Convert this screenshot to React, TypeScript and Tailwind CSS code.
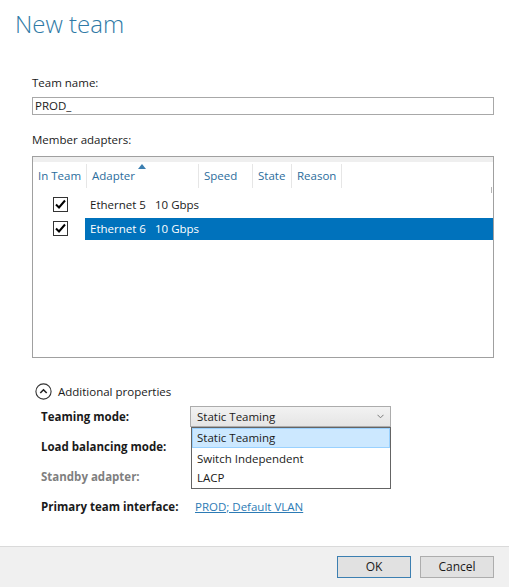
import React from 'react';

const font = { fontFamily: '"Segoe UI", "Open Sans", "Noto Sans", sans-serif' };

const adapters = [
  { name: 'Ethernet 5', speed: '10 Gbps', selected: false },
  { name: 'Ethernet 6', speed: '10 Gbps', selected: true },
];

const columns = [
  { label: 'In Team', w: 'w-[54px]' },
  { label: 'Adapter', w: 'w-[112px]', sorted: true },
  { label: 'Speed', w: 'w-[54px]' },
  { label: 'State', w: 'w-[39px]' },
  { label: 'Reason', w: 'w-[50px]' },
];

function Check() {
  return (
    <div className="w-[15px] h-[15px] border border-[#333] bg-white flex items-center justify-center">
      <svg width="11" height="10" viewBox="0 0 11 10">
        <path d="M1 5.5 L4 8.5 L10 1.5" fill="none" stroke="#000" strokeWidth="2" />
      </svg>
    </div>
  );
}

export default function App() {
  return (
    <div className="w-[509px] h-[587px] bg-white flex flex-col text-[11.5px] text-[#1a1a1a] overflow-hidden" style={font}>
      <div className="flex-1 flex flex-col">
        {/* Title */}
        <h1 className="pl-[15px] pt-[8px] text-[24px] font-light leading-[32px] text-[#2f7aa6]">New team</h1>

        <div className="pl-[32px] pr-[15px]">
          <p className="mt-[35px] leading-[16px]">Team name:</p>
          <div className="mt-[6px] h-[18px] border border-[#a8a8a8] flex items-center px-[2px] leading-none">PROD_</div>

          <p className="mt-[17px] leading-[16px]">Member adapters:</p>

          {/* Adapter list */}
          <div className="mt-[8px] h-[202px] border border-[#a0a0a0] flex flex-col relative">
            <div className="h-[5px] bg-[#efefef]" />
            <div className="mt-[2px] flex h-[24px] items-stretch">
              {columns.map(c => (
                <div key={c.label} className={`${c.w} relative flex items-center pl-[5px] border-r border-[#e6e6e6] text-[#2b6d9c]`}>
                  {c.sorted && (
                    <svg className="absolute left-[51px] top-[0px]" width="8" height="5" viewBox="0 0 8 5">
                      <path d="M0 5 L4 0 L8 5 Z" fill="#3c7fb1" />
                    </svg>
                  )}
                  {c.label}
                </div>
              ))}
            </div>
            <div className="mt-[6px] flex flex-col gap-[2px]">
              {adapters.map(a => (
                <div key={a.name} className="flex h-[22px] items-center">
                  <div className="w-[52px] flex justify-center pl-[3px] pb-[2px]">
                    <Check />
                  </div>
                  <div className={`flex-1 h-full flex items-center pl-[5px] ${a.selected ? 'bg-[#0072bc] text-white' : ''}`}>
                    <span className="w-[65px]">{a.name}</span>
                    <span>{a.speed}</span>
                  </div>
                </div>
              ))}
            </div>
            <div className="absolute right-[1px] top-[30px] w-[1px] h-[6px] bg-[#b5b5b5]" />
          </div>

          {/* Additional properties */}
          <div className="mt-[25px] flex items-center gap-[6px] pl-[3px]">
            <svg width="17" height="17" viewBox="0 0 17 17">
              <circle cx="8.5" cy="8.5" r="7.6" fill="none" stroke="#333" strokeWidth="1.1" />
              <path d="M5.3 10 L8.5 6.8 L11.7 10" fill="none" stroke="#222" strokeWidth="1.6" />
            </svg>
            <span>Additional properties</span>
          </div>

          <div className="mt-[1px] pl-[9px] grid grid-cols-[149px_201px] auto-rows-[30px] items-center">
            <span className="font-bold">Teaming mode:</span>
            <div className="relative">
              <div className="h-[21px] border border-[#acacac] bg-gradient-to-b from-[#f2f2f2] to-[#e5e5e5] flex items-center justify-between pl-[6px] pr-[6px]">
                <span>Static Teaming</span>
                <svg width="7" height="5" viewBox="0 0 7 5">
                  <path d="M0.5 0.8 L3.5 3.8 L6.5 0.8" fill="none" stroke="#7a7a7a" strokeWidth="1" />
                </svg>
              </div>
              {/* Open dropdown */}
              <div className="absolute left-[1px] right-0 top-[21px] h-[62px] border border-[#646464] bg-white flex flex-col z-10">
                <div className="h-[21px] bg-[#cce8ff] border border-[#99d1ff] flex items-center pl-[4px]">Static Teaming</div>
                <div className="h-[20px] flex items-center pl-[5px]">Switch Independent</div>
                <div className="h-[20px] flex items-center pl-[5px]">LACP</div>
              </div>
            </div>
            <span className="font-bold">Load balancing mode:</span>
            <div />
            <span className="font-bold text-[#7f7f7f]">Standby adapter:</span>
            <div />
            <span className="font-bold">Primary team interface:</span>
            <a className="pl-[5px] text-[#2c7bb5] underline">PROD; Default VLAN</a>
          </div>
        </div>
      </div>

      {/* Footer */}
      <div className="h-[41px] bg-[#f0f0f0] border-t border-[#dadada] flex items-center justify-end gap-[9px] pr-[15px]">
        <button className="w-[74px] h-[22px] bg-[#e1e1e1] border border-[#3c7fb1] text-[12px]">OK</button>
        <button className="w-[74px] h-[22px] bg-[#e1e1e1] border border-[#adadad] text-[12px]">Cancel</button>
      </div>
    </div>
  );
}
